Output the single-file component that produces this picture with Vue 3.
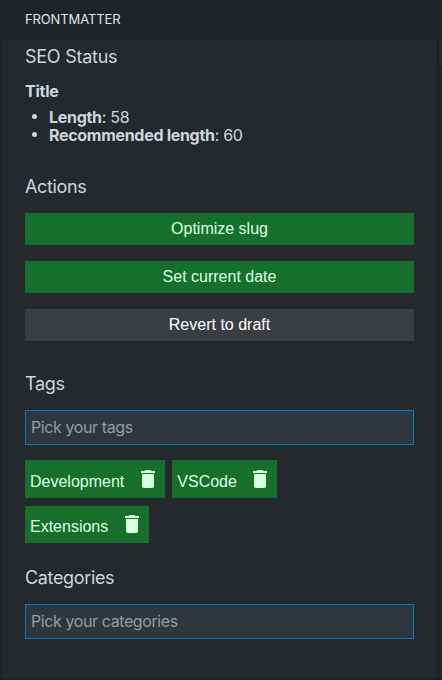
<script setup>
import { ref } from 'vue'

const stats = [
  { label: 'Length', value: 58 },
  { label: 'Recommended length', value: 60 },
]
const actions = [
  { label: 'Optimize slug' },
  { label: 'Set current date' },
  { label: 'Revert to draft', secondary: true },
]
const tags = ref(['Development', 'VSCode', 'Extensions'])
const remove = (tag) => {
  tags.value = tags.value.filter((t) => t !== tag)
}
</script>

<template>
  <div class="window">
    <main class="panel">
      <header class="bar">FRONTMATTER</header>
      <section class="seo">
        <h3 class="heading">SEO Status</h3>
        <h4 class="sub">Title</h4>
        <ul class="stats">
          <li v-for="s in stats" :key="s.label"><strong>{{ s.label }}</strong>: {{ s.value }}</li>
        </ul>
      </section>
      <section class="actions">
        <h3 class="heading">Actions</h3>
        <button v-for="a in actions" :key="a.label" class="btn" :class="{ secondary: a.secondary }">{{ a.label }}</button>
      </section>
      <section class="tags">
        <h3 class="heading">Tags</h3>
        <input class="field" placeholder="Pick your tags" />
        <div class="chips">
          <button v-for="t in tags" :key="t" class="chip" @click="remove(t)">
            <span class="name">{{ t }}</span>
            <svg class="bin" viewBox="0 0 14 18">
              <path d="M1 4h12v12a2 2 0 0 1-2 2H3a2 2 0 0 1-2-2zM14 1v2H0V1h3.5l1-1h5l1 1z" />
            </svg>
          </button>
        </div>
      </section>
      <section class="categories">
        <h3 class="heading">Categories</h3>
        <input class="field" placeholder="Pick your categories" />
      </section>
    </main>
    <aside class="edge"><div class="edge-top"></div></aside>
  </div>
</template>

<style>
body {
  background: #1b1f23;
}
</style>

<style scoped>
.window {
  box-sizing: border-box;
  display: flex;
  width: 442px;
  height: 680px;
  padding: 0 0 2px 1px;
  background: #1d2125;
  font-family: Inter, "Liberation Sans", sans-serif;
  color: #d1d5da;
}
.panel {
  width: 436px;
  background: #24292e;
}
.edge {
  width: 3px;
  margin-left: 2px;
  background: #1f2529;
}
.edge-top {
  height: 26px;
  margin-top: 40px;
  background: #23292d;
  border-bottom: 1px solid #1a1e22;
}
.bar {
  height: 40px;
  padding-left: 24px;
  background: #1f2428;
  color: #e1e4e8;
  font-size: 13px;
  line-height: 39px;
  letter-spacing: -0.12px;
}
section {
  width: 389px;
  margin-left: 24px;
}
.heading {
  margin: 0;
  font-size: 18px;
  font-weight: 400;
  line-height: 22px;
  letter-spacing: -0.35px;
}
.seo {
  padding-top: 6px;
  height: 130px;
  box-sizing: border-box;
}
.seo .heading {
  letter-spacing: -0.25px;
}
.sub {
  margin: 14px 0 8px;
  font-size: 16px;
  font-weight: 700;
  line-height: 18px;
  letter-spacing: -0.25px;
}
.stats {
  margin: 0;
  padding-left: 24px;
  list-style: none;
  font-size: 16px;
  line-height: 18px;
  letter-spacing: -0.3px;
}
.stats li::before {
  content: "";
  float: left;
  width: 5px;
  height: 5px;
  margin: 6px 0 0 -17px;
  border-radius: 50%;
  background: #d1d5da;
}
.actions {
  padding-top: 6px;
}
.actions .heading {
  margin-bottom: 15px;
}
.btn {
  display: block;
  width: 100%;
  height: 32px;
  margin: 0 0 16px;
  padding: 0;
  border: 0;
  background: #176f2c;
  color: #dcffe4;
  font: 16px "Liberation Sans", Arial, sans-serif;
}
.btn.secondary {
  background: #3a3d41;
  color: #fff;
}
.tags {
  padding-top: 16px;
}
.field {
  display: block;
  box-sizing: border-box;
  width: 100%;
  height: 35px;
  margin: 15px 0 0;
  padding: 0 5px 2px;
  border: 1px solid #007acc;
  border-radius: 0;
  background: #2f363d;
  color: #e1e4e8;
  font: 16px Inter, "Liberation Sans", sans-serif;
  letter-spacing: -0.4px;
}
.field::placeholder {
  color: #959da5;
  opacity: 1;
}
.chips {
  display: flex;
  flex-wrap: wrap;
  gap: 8px 7px;
  margin-top: 15px;
  width: 300px;
}
.chip {
  display: flex;
  height: 38px;
  padding: 0 10px 0 5px;
  border: 0;
  background: #176f2c;
  color: #dcffe4;
  font: 16px/18px "Liberation Sans", Arial, sans-serif;
}
.chip:last-child {
  height: 37px;
}
.name {
  margin: 13px 17px 0 0;
}
.chip:nth-child(2) .name {
  margin-right: 16px;
}
.chip:last-child .name {
  margin-top: 12px;
}
.bin {
  width: 14px;
  height: 18px;
  margin-top: 10px;
  fill: #dcffe4;
}
.chip:last-child .bin {
  margin-top: 9px;
}
.categories {
  padding-top: 24px;
}
</style>
